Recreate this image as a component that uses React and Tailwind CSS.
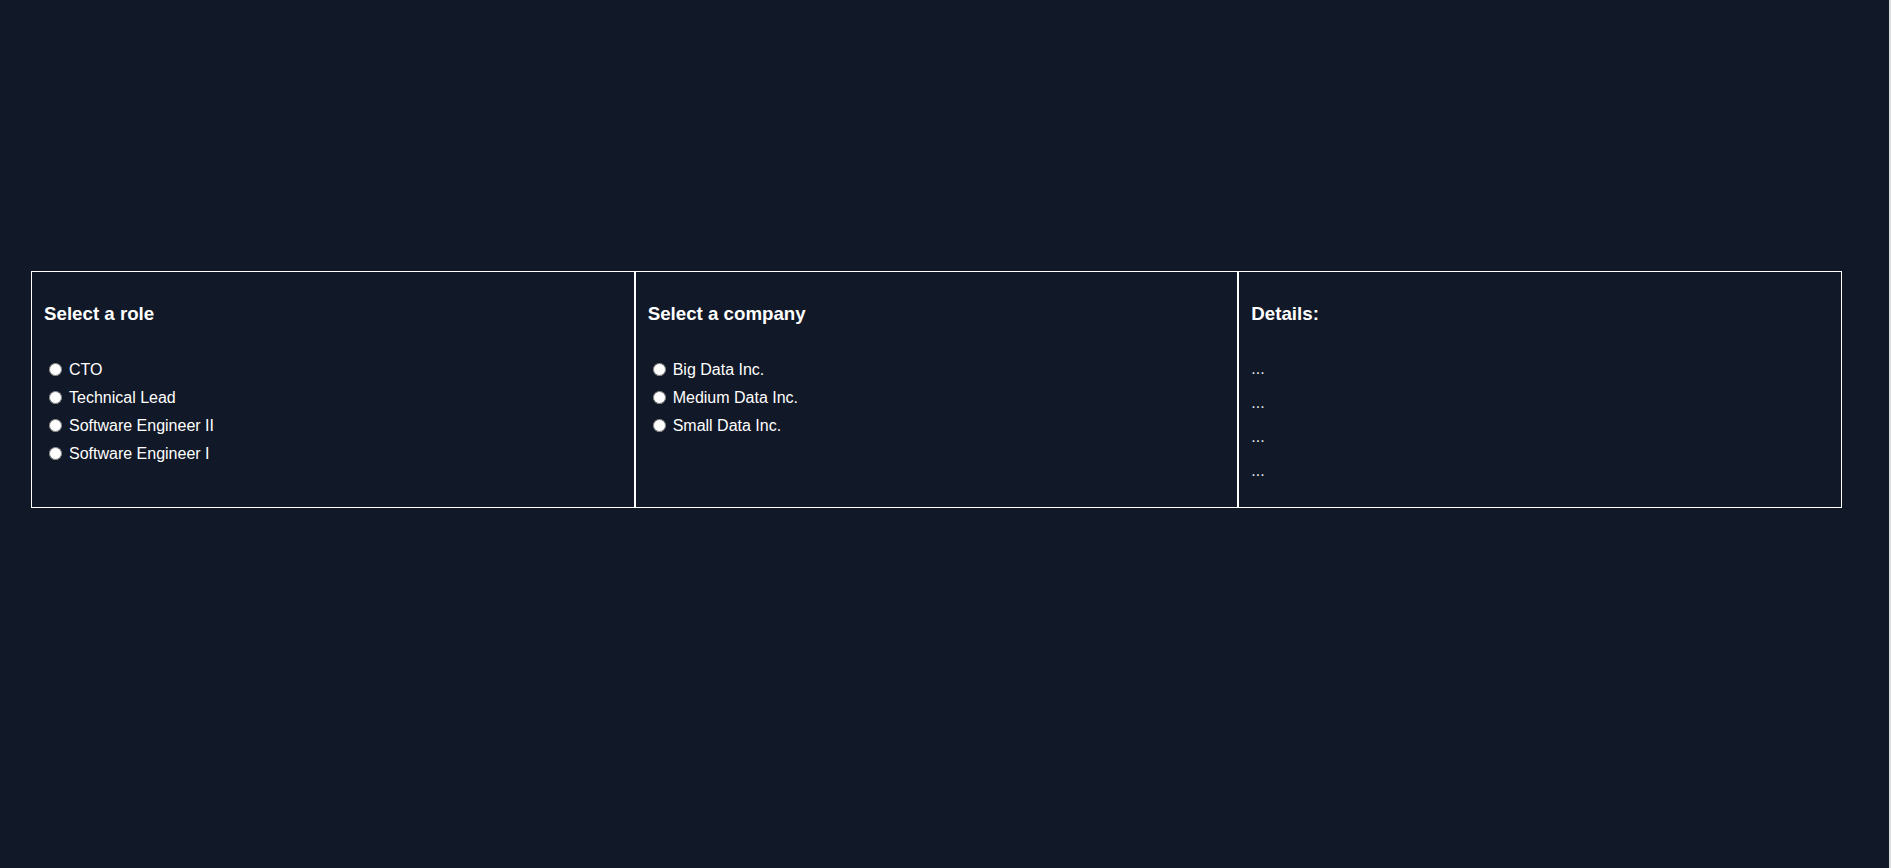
import { useState } from "react";

const roles = ["CTO", "Technical Lead", "Software Engineer II", "Software Engineer I"];
const companies = ["Big Data Inc.", "Medium Data Inc.", "Small Data Inc."];

function RadioList({ name, items, value, onChange }) {
  return (
    <div className="mt-[31.7px] flex flex-col">
      {items.map((item) => (
        <label key={item} className="flex h-7 items-center text-[16px] leading-[18px] text-white">
          <input
            type="radio"
            name={name}
            checked={value === item}
            onChange={() => onChange(item)}
            className="mb-[2px] ml-[5px] h-[13px] w-[13px]"
          />
          <span className="ml-[7px]">{item}</span>
        </label>
      ))}
    </div>
  );
}

export default function App() {
  const [role, setRole] = useState(null);
  const [company, setCompany] = useState(null);

  return (
    <div className="flex h-[868px] w-full bg-[#111827] font-['Liberation_Sans',Arial,sans-serif]">
      <div className="flex-1 pl-[31px] pt-[271px]">
        <div className="flex h-[237px] w-[1811px]">
          {/* ROLE */}
          <div className="flex w-1/3 flex-col border border-white pl-3 pt-[31px]">
            <h3 className="text-[18.72px] font-bold leading-[21.5px] text-white">Select a role</h3>
            <RadioList name="role" items={roles} value={role} onChange={setRole} />
          </div>

          {/* COMPANY */}
          <div className="flex w-1/3 flex-col border border-white pl-3 pt-[31px]">
            <h3 className="text-[18.72px] font-bold leading-[21.5px] text-white">Select a company</h3>
            <RadioList name="company" items={companies} value={company} onChange={setCompany} />
          </div>

          {/* DETAILS */}
          <div className="flex w-1/3 flex-col border border-white pl-3 pt-[31px]">
            <h3 className="text-[18.72px] font-bold leading-[21.5px] text-white">Details:</h3>
            <div className="mt-[35px] flex flex-col gap-4 text-[16px] leading-[18px] text-[#e5e7eb]">
              <p>{role ? role : "..."}</p>
              <p>{company ? company : "..."}</p>
              <p>...</p>
              <p>...</p>
            </div>
          </div>
        </div>
      </div>
      <div className="w-[2px] bg-[#dcdcdc]" />
    </div>
  );
}
